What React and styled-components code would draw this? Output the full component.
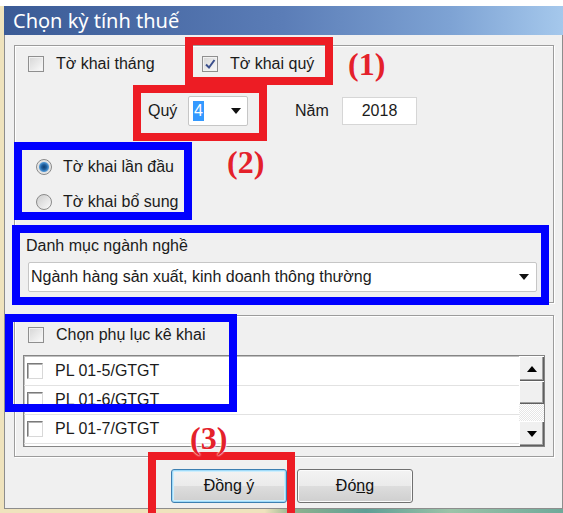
import React from 'react'
import styled, { createGlobalStyle } from 'styled-components'

const GlobalStyle = createGlobalStyle`
    html, body {
        margin: 0;
        padding: 0;
        background: #fff;
    }
    body {
        font-family: "Liberation Sans", Arial, sans-serif;
        color: #1b1b1b;
    }
`

const Screen = styled.div`
    position: relative;
    width: 563px;
    height: 513px;
    overflow: hidden;
    display: flex;
    flex-direction: column;
    background: #fff;
`

const TopGap = styled.div`
    height: 6px;
    flex: none;
`

const Desk = styled.div`
    flex: 1;
    display: flex;
    min-height: 0;
`

const DeskEdge = styled.div`
    width: 4px;
    flex: none;
    background: #efe3bd;
`

const BottomStrip = styled.div`
    height: 4px;
    flex: none;
    background: linear-gradient(90deg, #efe3bd 0, #efe3bd 47%, #8fb28e 52%, #5f9f96 65%, #9cc3a8 80%, #6fa99a 100%);
`

const Window = styled.div`
    flex: 1;
    display: flex;
    flex-direction: column;
    min-width: 0;
`

const TitleBar = styled.div`
    height: 29px;
    flex: none;
    display: flex;
    align-items: center;
    padding-left: 9px;
    background: linear-gradient(90deg, #3b5b96 0%, #4a6ba6 25%, #5b7db7 50%, #7ea3d4 80%, #a5c8ec 100%);
    color: #fff;
    font-family: "Noto Sans", sans-serif;
    font-size: 20px;
    white-space: nowrap;
`

const Body = styled.div`
    flex: 1;
    box-sizing: border-box;
    background: #f0f0f0;
    border: 1px solid #8d8d8d;
    border-top: 0;
    padding: 10px 8px 0 9px;
    display: flex;
    flex-direction: column;
`

const Group = styled.div`
    height: ${p => p.$h}px;
    flex: none;
    box-sizing: border-box;
    margin-top: ${p => p.$mt || 0}px;
    border: 1px solid #9c9c9c;
    box-shadow: inset 1px 1px 0 #fff, 1px 1px 0 #fff;
    display: flex;
    flex-direction: column;
`

const CheckRow = styled.div`
    display: grid;
    grid-template-columns: 174px 146px auto;
    grid-template-rows: 20px;
    align-items: center;
    height: 20px;
    margin: 8px 0 0 13px;
`

const CheckItem = styled.label`
    display: flex;
    align-items: center;
    gap: 12px;
    font-size: 16px;
    white-space: nowrap;
`

const CheckBox = styled.span`
    width: 16px;
    height: 16px;
    flex: none;
    box-sizing: border-box;
    display: grid;
    place-items: center;
    border: 1px solid #8f8f8f;
    background: linear-gradient(135deg, #d6d6d6, #fbfbfb);
    box-shadow: inset 0 0 0 1px #f2f2f2;
`

const ListCheckBox = styled.span`
    width: 16px;
    height: 16px;
    flex: none;
    box-sizing: border-box;
    background: #fff;
    border: 1px solid;
    border-color: #7a7a7a #d8d8d8 #d8d8d8 #7a7a7a;
    box-shadow: inset 1px 1px 0 #b4b4b4;
`

const StepLabel = styled.span`
    font-family: "Liberation Serif", "Times New Roman", serif;
    font-weight: bold;
    font-size: 32px;
    line-height: 1;
    color: #e4212b;
    white-space: nowrap;
`

const FloatingStep = styled(StepLabel)`
    position: absolute;
    left: 190px;
    top: 422px;
    text-shadow: 0 0 2px #fff, 0 0 2px #fff;
`

const PeriodRow = styled.div`
    display: flex;
    align-items: center;
    height: 30px;
    margin: 22px 0 0 133px;
`

const FieldLabel = styled.span`
    width: ${p => p.$w}px;
    margin-left: ${p => p.$ml || 0}px;
    font-size: 16px;
    flex: none;
`

const Combo = styled.div`
    width: ${p => p.$w}px;
    height: 30px;
    box-sizing: border-box;
    margin: ${p => p.$m || 0};
    display: flex;
    align-items: center;
    justify-content: space-between;
    padding: 0 ${p => p.$pr || 6}px 0 ${p => p.$pl || 4}px;
    background: #fff;
    border: 1px solid #c6c6c6;
    border-radius: 2px;
    font-size: 16px;
    white-space: nowrap;
`

const Selected = styled.span`
    background: #3399ff;
    color: #fff;
    line-height: 20px;
    padding: 0 1px;
`

const DropArrow = styled.span`
    width: 0;
    height: 0;
    border-left: 5px solid transparent;
    border-right: 5px solid transparent;
    border-top: 6px solid #111;
`

const TextBox = styled.div`
    width: 75px;
    height: 28px;
    box-sizing: border-box;
    display: flex;
    align-items: center;
    justify-content: center;
    background: #fff;
    border: 1px solid #d6d6d6;
    font-size: 16px;
`

const RadioSection = styled.div`
    display: flex;
    margin: 29px 0 0 21px;
`

const RadioList = styled.div`
    width: 191px;
    display: flex;
    flex-direction: column;
    gap: 11px;
`

const RadioItem = styled.label`
    height: 24px;
    display: flex;
    align-items: center;
    gap: 11px;
    font-size: 16px;
    white-space: nowrap;
`

const Radio = styled.span`
    width: 16px;
    height: 16px;
    flex: none;
    box-sizing: border-box;
    border-radius: 50%;
    border: 1px solid #8a8a8a;
    background: ${p => p.$on
        ? 'radial-gradient(circle, #123f70 0, #1f5f9e 2.5px, #4f95d2 4.5px, #e0e0e0 5.5px, #fbfbfb 100%)'
        : 'linear-gradient(135deg, #cdcdcd, #fafafa)'};
`

const RaisedStep = styled(StepLabel)`
    margin-top: -9px;
`

const SectionLabel = styled.div`
    margin: 23px 0 0 11px;
    line-height: 18px;
    font-size: 16px;
`

const HeaderRow = styled.div`
    height: 20px;
    margin: 9px 0 0 13px;
    display: flex;
    align-items: center;
`

const ListBox = styled.div`
    width: 522px;
    height: 92px;
    box-sizing: border-box;
    margin: 10px 0 0 8px;
    display: flex;
    background: #fff;
    border: 1px solid #858585;
    box-shadow: inset 1px 1px 0 #c0c0c0;
`

const Rows = styled.div`
    flex: 1;
    display: flex;
    flex-direction: column;
    padding-top: 1px;
`

const ListRow = styled.div`
    height: 29px;
    flex: none;
    box-sizing: border-box;
    display: flex;
    align-items: center;
    gap: 12px;
    padding-left: 3px;
    border-bottom: 1px solid #e2e2e2;
    font-size: 16px;
    white-space: nowrap;
`

const ScrollBar = styled.div`
    width: 25px;
    flex: none;
    display: flex;
    flex-direction: column;
`

const ScrollButton = styled.div`
    height: 25px;
    flex: none;
    display: grid;
    place-items: center;
    background: #f0f0f0;
    box-shadow: inset 1px 1px 0 #fff, inset -1px -1px 0 #5f5f5f, inset -2px -2px 0 #a0a0a0;
`

const Thumb = styled(ScrollButton)`
    height: 23px;
`

const Track = styled.div`
    flex: 1;
    background: repeating-conic-gradient(#fff 0 25%, #e6e6e6 0 50%) 0 0 / 2px 2px;
`

const TinyArrow = styled.span`
    width: 0;
    height: 0;
    border-left: 5px solid transparent;
    border-right: 5px solid transparent;
    ${p => p.$up ? 'border-bottom: 6px solid #000;' : 'border-top: 6px solid #000;'}
`

const ButtonRow = styled.div`
    display: flex;
    gap: 10px;
    margin: 12px 0 0 157px;
`

const Button = styled.button`
    width: 116px;
    height: 34px;
    padding: 0;
    border-radius: 3px;
    border: 1px solid ${p => p.$primary ? '#3c7fb1' : '#707070'};
    background: linear-gradient(#f3f3f3 0%, #ebebeb 50%, #dddddd 51%, #cfcfcf 100%);
    box-shadow: inset 0 0 0 1px ${p => p.$primary ? '#9fdaf8' : '#fbfbfb'}${p => p.$primary ? ', inset 0 0 0 2px #cdeefd' : ''};
    font-family: "Liberation Sans", Arial, sans-serif;
    font-size: 16px;
    color: #111;
`

const Frame = styled.div`
    position: absolute;
    left: ${p => p.$x}px;
    top: ${p => p.$y}px;
    width: ${p => p.$w}px;
    height: ${p => p.$h}px;
    box-sizing: border-box;
    border: 8px solid ${p => p.$tone === 'red' ? '#ed1c24' : '#0000ff'};
    pointer-events: none;
`

const Tick = () => (
    <svg width="12" height="12" viewBox="0 0 12 12">
        <polyline points="2,6.5 5,9.5 10.5,2" fill="none" stroke="#3b4f8c" strokeWidth="2" />
    </svg>
)

const appendix = ['PL 01-5/GTGT', 'PL 01-6/GTGT', 'PL 01-7/GTGT']

const App = () => (
    <Screen>
        <GlobalStyle />
        <TopGap />
        <Desk>
            <DeskEdge />
            <Window>
                <TitleBar>Chọn kỳ tính thuế</TitleBar>
                <Body>
                    <Group $h={258}>
                        <CheckRow>
                            <CheckItem><CheckBox />Tờ khai tháng</CheckItem>
                            <CheckItem><CheckBox><Tick /></CheckBox>Tờ khai quý</CheckItem>
                            <StepLabel>(1)</StepLabel>
                        </CheckRow>
                        <PeriodRow>
                            <FieldLabel $w={40}>Quý</FieldLabel>
                            <Combo $w={60}>
                                <Selected>4</Selected>
                                <DropArrow />
                            </Combo>
                            <FieldLabel $w={47} $ml={47}>Năm</FieldLabel>
                            <TextBox>2018</TextBox>
                        </PeriodRow>
                        <RadioSection>
                            <RadioList>
                                <RadioItem><Radio $on />Tờ khai lần đầu</RadioItem>
                                <RadioItem><Radio />Tờ khai bổ sung</RadioItem>
                            </RadioList>
                            <RaisedStep>(2)</RaisedStep>
                        </RadioSection>
                        <SectionLabel>Danh mục ngành nghề</SectionLabel>
                        <Combo $w={509} $m="7px 0 0 13px" $pl={2} $pr={7}>
                            <span>Ngành hàng sản xuất, kinh doanh thông thường</span>
                            <DropArrow />
                        </Combo>
                    </Group>
                    <Group $h={142} $mt={12}>
                        <HeaderRow>
                            <CheckItem><CheckBox />Chọn phụ lục kê khai</CheckItem>
                        </HeaderRow>
                        <ListBox>
                            <Rows>
                                {appendix.map(name => (
                                    <ListRow key={name}><ListCheckBox />{name}</ListRow>
                                ))}
                            </Rows>
                            <ScrollBar>
                                <ScrollButton><TinyArrow $up /></ScrollButton>
                                <Thumb />
                                <Track />
                                <ScrollButton><TinyArrow /></ScrollButton>
                            </ScrollBar>
                        </ListBox>
                    </Group>
                    <ButtonRow>
                        <Button $primary>Đồn<u>g</u> ý</Button>
                        <Button>Đó<u>n</u>g</Button>
                    </ButtonRow>
                </Body>
            </Window>
        </Desk>
        <BottomStrip />

        <Frame $tone="red" $x={185} $y={37} $w={148} $h={48} />
        <Frame $tone="red" $x={133} $y={85} $w={134} $h={56} />
        <Frame $tone="blue" $x={14} $y={142} $w={178} $h={78} />
        <Frame $tone="blue" $x={12} $y={225} $w={537} $h={80} />
        <Frame $tone="blue" $x={5} $y={314} $w={232} $h={98} />
        <Frame $tone="red" $x={148} $y={452} $w={147} $h={72} />
        <FloatingStep>(3)</FloatingStep>
    </Screen>
)

export default App
